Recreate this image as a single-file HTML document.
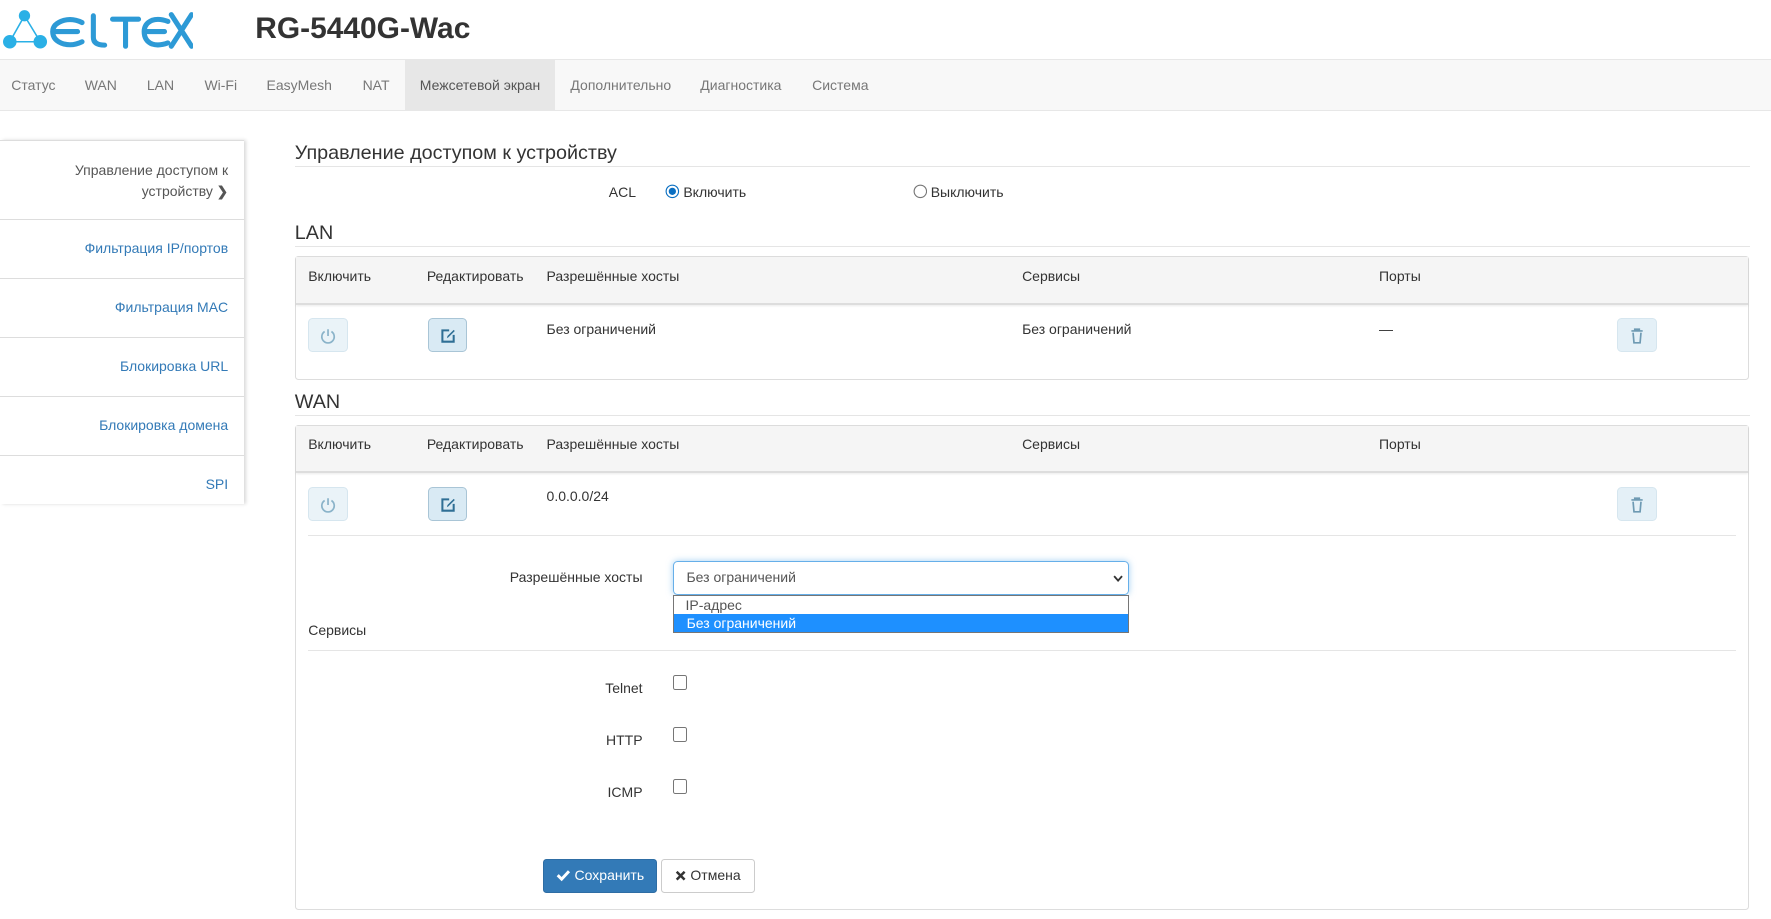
<!DOCTYPE html>
<html><head><meta charset="utf-8"><style>
html,body{margin:0;padding:0;background:#fff;width:1771px;height:919px;overflow:hidden}
#w{zoom:1.1295;position:relative;width:1568px;height:814px;font-family:"Liberation Sans",Arial,sans-serif;font-size:12.4px;color:#333}
.a{position:absolute;white-space:nowrap}
.hdr{position:absolute;left:0;top:0;width:1568px;height:52px;border-bottom:1px solid #e7e7e7}
.nav{position:absolute;left:0;top:53px;width:1568px;height:44px;background:#f8f8f8;border-bottom:1px solid #e7e7e7}
.nav span{position:absolute;top:0;line-height:45px;color:#777}
.side{position:absolute;left:0;top:124px;width:216px;height:322px;box-shadow:2px 0 3px rgba(0,0,0,.15)}
.si{position:absolute;left:0;width:216px;border-top:1px solid #ddd;text-align:right;color:#337ab7;box-sizing:border-box;padding-right:14px}
.h4{position:absolute;left:261px;width:1288px;font-size:17.5px;color:#333;border-bottom:1px solid #e5e5e5;height:22px;line-height:22px}
.panel{position:absolute;left:261px;width:1286px;border:1px solid #ddd;border-radius:3px}
.th{position:absolute;left:0;top:0;width:1286px;height:40px;background:#f5f5f5;border-bottom:2px solid #ddd;box-shadow:0 1px 2px rgba(0,0,0,.08)}
.btn{position:absolute;width:35px;height:30px;border:1px solid #c9dde8;border-radius:4px;background:#e4f0f7;box-sizing:border-box}
.btn svg{position:absolute;left:9px;top:7px}
.cb{position:absolute;width:11px;height:11px;border:1px solid #767676;border-radius:2px;background:#fff}
</style></head><body><div id="w">
<div class="hdr"></div>
<svg class="a" style="left:3px;top:8px" width="168" height="36" viewBox="0 0 168 36">
<g fill="#2ab0e6"><circle cx="19" cy="6" r="5"/><circle cx="6" cy="29" r="6"/><circle cx="33" cy="29" r="6"/></g>
<g stroke="#2ab0e6" stroke-width="1.4" fill="none"><path d="M19 6 L6 29 M19 6 L33 29 M6 29 L33 29"/></g>
<g stroke="#2d9ad6" stroke-width="4.5" fill="none" stroke-linecap="round">
<path d="M70 12 Q62 8 54 10 Q44 13 44 20 Q44 28 54 31 Q62 33 70 29 M45 20 L66 20"/>
<path d="M80 6 L80 25 Q80 32 90 32"/>
<path d="M97 9 L120 9 M108.5 9 L108.5 33"/>
<path d="M146 11 Q138 8 132 10 Q125 13 125 20 Q125 28 132 31 Q138 33 146 30 M126 20 L143 20"/>
<path d="M149 5 L167 33 M167 5 L149 33"/>
</g>
</svg>
<div class="a" style="left:226px;top:11px;font-size:26.5px;font-weight:bold;color:#333">RG-5440G-Wac</div>
<div class="nav">
<span style="left:10px">Статус</span><span style="left:75px">WAN</span><span style="left:130px">LAN</span><span style="left:181px">Wi-Fi</span><span style="left:236px">EasyMesh</span><span style="left:321px">NAT</span>
<span style="left:359px;width:132px;background:#e7e7e7;color:#555;text-align:center">Межсетевой экран</span>
<span style="left:505px">Дополнительно</span><span style="left:620px">Диагностика</span><span style="left:719px">Система</span>
</div>
<div class="side">
<div class="si" style="top:0;height:70px;padding-top:17px;line-height:18px;color:#555">Управление доступом к<br>устройству <b style="font-size:12px">&#x276F;</b></div>
<div class="si" style="top:70px;height:52px;line-height:50px">Фильтрация IP/портов</div>
<div class="si" style="top:122px;height:52px;line-height:50px">Фильтрация MAC</div>
<div class="si" style="top:174px;height:52px;line-height:50px">Блокировка URL</div>
<div class="si" style="top:227px;height:52px;line-height:50px">Блокировка домена</div>
<div class="si" style="top:279px;height:43px;line-height:50px">SPI</div>
</div>
<div class="h4" style="top:125px">Управление доступом к устройству</div>
<div class="a" style="left:539px;top:163px">ACL</div>
<svg class="a" style="left:589px;top:163px" width="13" height="13"><circle cx="6.5" cy="6.5" r="5.5" fill="#fff" stroke="#0a6fc2" stroke-width="1"/><circle cx="6.5" cy="6.5" r="3.2" fill="#0a6fc2"/></svg>
<div class="a" style="left:605px;top:163px">Включить</div>
<svg class="a" style="left:808px;top:163px" width="13" height="13"><circle cx="6.5" cy="6.5" r="5.5" fill="#fff" stroke="#767676" stroke-width="1"/></svg>
<div class="a" style="left:824px;top:163px">Выключить</div>

<div class="h4" style="top:196px">LAN</div>
<div class="panel" style="top:227px;height:108px">
<div class="th"></div>
<div class="a" style="left:11px;top:9px">Включить</div><div class="a" style="left:116px;top:9px">Редактировать</div><div class="a" style="left:222px;top:9px">Разрешённые хосты</div><div class="a" style="left:643px;top:9px">Сервисы</div><div class="a" style="left:959px;top:9px">Порты</div>
<div class="btn" style="left:11px;top:54px;background:#eaf3f8;border-color:#d6e6ef"><svg width="16" height="16" viewBox="0 0 16 16"><path d="M5 4 A5.5 5.5 0 1 0 11 4 M8 2 L8 8" stroke="#8ab3c9" stroke-width="1.5" fill="none"/></svg></div>
<div class="btn" style="left:117px;top:54px;background:#d9eaf4;border-color:#a9c5d6"><svg width="16" height="16" viewBox="0 0 16 16"><path d="M9 3 H3 V13 H13 V7" stroke="#2f6f95" stroke-width="1.8" fill="none"/><path d="M7 10 L7.5 8 L13 2.5 L14 3.5 L8.5 9 Z" fill="#2f6f95"/></svg></div>
<div class="a" style="left:222px;top:56px">Без ограничений</div><div class="a" style="left:643px;top:56px">Без ограничений</div><div class="a" style="left:959px;top:56px">—</div>
<div class="btn" style="left:1170px;top:54px;background:#e4f0f7;border-color:#d6e6ef"><svg width="16" height="16" viewBox="0 0 16 16"><path d="M3 3.5 H13 M6 3.5 V2 H10 V3.5 M4.5 5 L5.3 14 H10.7 L11.5 5" stroke="#6e9ab3" stroke-width="1.5" fill="none"/></svg></div>
</div>

<div class="h4" style="top:345px">WAN</div>
<div class="panel" style="top:376px;height:428px">
<div class="th"></div>
<div class="a" style="left:11px;top:9px">Включить</div><div class="a" style="left:116px;top:9px">Редактировать</div><div class="a" style="left:222px;top:9px">Разрешённые хосты</div><div class="a" style="left:643px;top:9px">Сервисы</div><div class="a" style="left:959px;top:9px">Порты</div>
<div class="btn" style="left:11px;top:54px;background:#eaf3f8;border-color:#d6e6ef"><svg width="16" height="16" viewBox="0 0 16 16"><path d="M5 4 A5.5 5.5 0 1 0 11 4 M8 2 L8 8" stroke="#8ab3c9" stroke-width="1.5" fill="none"/></svg></div>
<div class="btn" style="left:117px;top:54px;background:#d9eaf4;border-color:#a9c5d6"><svg width="16" height="16" viewBox="0 0 16 16"><path d="M9 3 H3 V13 H13 V7" stroke="#2f6f95" stroke-width="1.8" fill="none"/><path d="M7 10 L7.5 8 L13 2.5 L14 3.5 L8.5 9 Z" fill="#2f6f95"/></svg></div>
<div class="a" style="left:222px;top:55px">0.0.0.0/24</div>
<div class="btn" style="left:1170px;top:54px;background:#e4f0f7;border-color:#d6e6ef"><svg width="16" height="16" viewBox="0 0 16 16"><path d="M3 3.5 H13 M6 3.5 V2 H10 V3.5 M4.5 5 L5.3 14 H10.7 L11.5 5" stroke="#6e9ab3" stroke-width="1.5" fill="none"/></svg></div>
<div class="a" style="left:11px;top:97px;width:1264px;border-top:1px solid #e5e5e5"></div>
<div class="a" style="left:0;top:127px;width:307px;text-align:right">Разрешённые хосты</div>
<div class="a" style="left:334px;top:120px;height:28px;border:1px solid #66afe9;border-radius:4px;box-shadow:0 0 6px rgba(102,175,233,.6);line-height:28px;padding-left:11px;width:391px;color:#555">Без ограничений<svg style="position:absolute;right:4px;top:11px" width="9" height="7"><path d="M1 1 L4.5 5 L8 1" stroke="#333" stroke-width="1.6" fill="none"/></svg></div>
<div class="a" style="left:334px;top:150px;width:402px;height:32px;border:1px solid #767676;background:#fff"></div>
<div class="a" style="left:345px;top:151px;color:#555;line-height:16px">IP-адрес</div>
<div class="a" style="left:335px;top:167px;width:402px;height:16px;background:#1e90ff;color:#fff;line-height:16px;padding-left:11px;box-sizing:border-box">Без ограничений</div>
<div class="a" style="left:11px;top:174px">Сервисы</div>
<div class="a" style="left:11px;top:199px;width:1264px;border-top:1px solid #e5e5e5"></div>
<div class="a" style="left:0;top:225px;width:307px;text-align:right">Telnet</div><div class="cb" style="left:334px;top:221px"></div>
<div class="a" style="left:0;top:271px;width:307px;text-align:right">HTTP</div><div class="cb" style="left:334px;top:267px"></div>
<div class="a" style="left:0;top:317px;width:307px;text-align:right">ICMP</div><div class="cb" style="left:334px;top:313px"></div>
<div class="a" style="left:219px;top:384px;width:99px;height:28px;background:#337ab7;border:1px solid #2e6da4;border-radius:3px;color:#fff;line-height:28px;text-align:center"><svg width="13" height="11" style="vertical-align:-1px"><path d="M1.5 5.5 L5 9 L11.5 2" stroke="#fff" stroke-width="2.6" fill="none"/></svg> Сохранить</div>
<div class="a" style="left:323px;top:384px;width:82px;height:28px;background:#fff;border:1px solid #ccc;border-radius:3px;color:#333;line-height:28px;text-align:center"><svg width="10" height="10" style="vertical-align:-1px"><path d="M1.5 1.5 L8.5 8.5 M8.5 1.5 L1.5 8.5" stroke="#333" stroke-width="2.2"/></svg> Отмена</div>
</div>
</div></body></html>
